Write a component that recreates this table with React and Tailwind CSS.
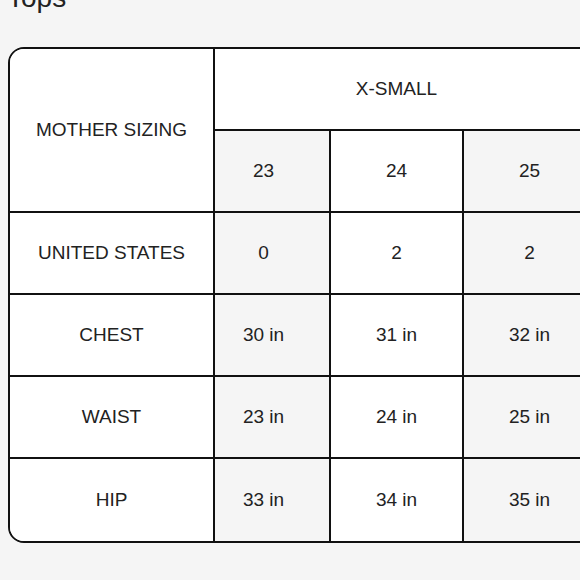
import React from "react";

const rows = [
  ["UNITED STATES", "0", "2", "2"],
  ["CHEST", "30 in", "31 in", "32 in"],
  ["WAIST", "23 in", "24 in", "25 in"],
  ["HIP", "33 in", "34 in", "35 in"],
];

export default function App() {
  return (
    <div
      className="w-[580px] h-[580px] bg-[#f5f5f5] overflow-hidden text-[#222]"
      style={{ fontFamily: '"Liberation Sans", Arial, sans-serif' }}
    >
      <div className="ml-[7px] mt-[-16px] text-[28px] leading-[28px] text-[#222]">Tops</div>
      <div className="mt-[35px] ml-[8px] w-[640px] border-2 border-[#111] rounded-l-[16px] overflow-hidden bg-white">
        {/* header */}
        <div className="flex border-b-2 border-[#111]">
          <div className="w-[205px] shrink-0 h-[162px] border-r-2 border-[#111] bg-white flex items-center justify-center text-[19px]">
            MOTHER SIZING
          </div>
          <div className="flex flex-col">
            <div className="h-[82px] w-[380px] border-b-2 border-[#111] bg-white flex items-center justify-center pr-[17px] text-[19px]">
              X-SMALL
            </div>
            <div className="flex h-[80px]">
              <div className="w-[116px] shrink-0 border-r-2 border-[#111] bg-[#f5f5f5] flex items-center justify-center pr-[17px] text-[19px]">23</div>
              <div className="w-[133px] shrink-0 border-r-2 border-[#111] bg-white flex items-center justify-center text-[19px]">24</div>
              <div className="w-[133px] shrink-0 border-r-2 border-[#111] bg-[#f5f5f5] flex items-center justify-center text-[19px]">25</div>
            </div>
          </div>
        </div>
        {rows.map((r, i) => (
          <div key={i} className={"flex h-[82px] " + (i < rows.length - 1 ? "border-b-2 border-[#111]" : "")}>
            <div className="w-[205px] shrink-0 border-r-2 border-[#111] bg-white flex items-center justify-center text-[19px]">{r[0]}</div>
            <div className="w-[116px] shrink-0 border-r-2 border-[#111] bg-[#f5f5f5] flex items-center justify-center pr-[17px] text-[19px]">{r[1]}</div>
            <div className="w-[133px] shrink-0 border-r-2 border-[#111] bg-white flex items-center justify-center text-[19px]">{r[2]}</div>
            <div className="w-[133px] shrink-0 border-r-2 border-[#111] bg-[#f5f5f5] flex items-center justify-center text-[19px]">{r[3]}</div>
          </div>
        ))}
      </div>
    </div>
  );
}
